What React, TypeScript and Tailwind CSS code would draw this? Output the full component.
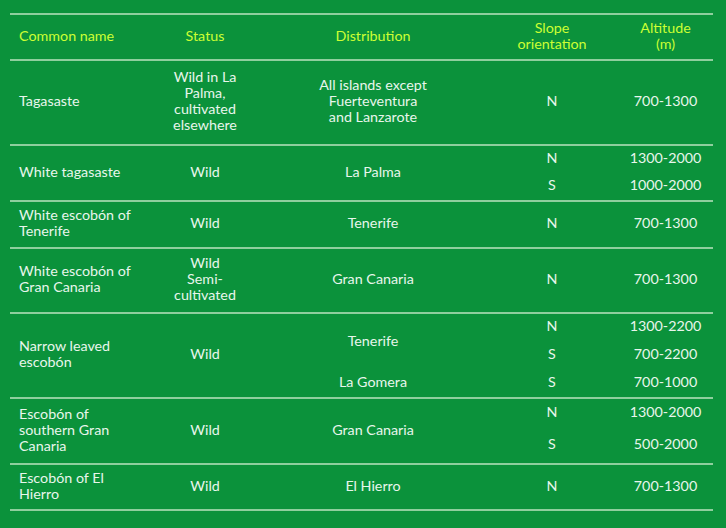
const LINE = "border-b-2 border-[#8fcf9e]";

interface SubRow {
  dist?: string;
  distSpan?: number;
  slope: string;
  alt: string;
  h: number;
}

interface Species {
  name: string[];
  status: string[];
  subs: SubRow[];
}

const DATA: Species[] = [
  {
    name: ["Tagasaste"],
    status: ["Wild in La", "Palma,", "cultivated", "elsewhere"],
    subs: [{ dist: "All islands except\nFuerteventura\nand Lanzarote", slope: "N", alt: "700-1300", h: 85 }],
  },
  {
    name: ["White tagasaste"],
    status: ["Wild"],
    subs: [
      { dist: "La Palma", distSpan: 2, slope: "N", alt: "1300-2000", h: 27 },
      { slope: "S", alt: "1000-2000", h: 29 },
    ],
  },
  {
    name: ["White escobón of", "Tenerife"],
    status: ["Wild"],
    subs: [{ dist: "Tenerife", slope: "N", alt: "700-1300", h: 47 }],
  },
  {
    name: ["White escobón of", "Gran Canaria"],
    status: ["Wild", "Semi-", "cultivated"],
    subs: [{ dist: "Gran Canaria", slope: "N", alt: "700-1300", h: 65 }],
  },
  {
    name: ["Narrow leaved", "escobón"],
    status: ["Wild"],
    subs: [
      { dist: "Tenerife", distSpan: 2, slope: "N", alt: "1300-2200", h: 28 },
      { slope: "S", alt: "700-2200", h: 29 },
      { dist: "La Gomera", slope: "S", alt: "700-1000", h: 28 },
    ],
  },
  {
    name: ["Escobón of", "southern Gran", "Canaria"],
    status: ["Wild"],
    subs: [
      { dist: "Gran Canaria", distSpan: 2, slope: "N", alt: "1300-2000", h: 29 },
      { slope: "S", alt: "500-2000", h: 37 },
    ],
  },
  {
    name: ["Escobón of El", "Hierro"],
    status: ["Wild"],
    subs: [{ dist: "El Hierro", slope: "N", alt: "700-1300", h: 46 }],
  },
];

function Lines({ lines }: { lines: string[] }) {
  return (
    <>
      {lines.map((l, i) => (
        <div key={i}>{l}</div>
      ))}
    </>
  );
}

export default function App() {
  return (
    <div className="h-[528px] w-[726px] bg-[#0b923b] pt-[13px] pl-[10px] font-['Lato','Liberation_Sans',sans-serif] text-[14.3px] leading-[16px] text-[#e8f6ec]">
      <table className="w-[703px] table-fixed border-collapse border-t-2 border-[#8fcf9e]">
        <colgroup>
          <col className="w-[140px]" />
          <col className="w-[110px]" />
          <col className="w-[226px]" />
          <col className="w-[132px]" />
          <col className="w-[95px]" />
        </colgroup>
        <thead>
          <tr className={`h-[46px] text-[#ccff33] ${LINE}`}>
            <th className="pb-[3px] pl-[9px] text-left font-normal">Common name</th>
            <th className="pb-[3px] font-normal">Status</th>
            <th className="pb-[3px] font-normal">Distribution</th>
            <th className="pb-[3px] font-normal">
              <div>Slope</div>
              <div>orientation</div>
            </th>
            <th className="pb-[3px] font-normal">
              <div>Altitude</div>
              <div>(m)</div>
            </th>
          </tr>
        </thead>
        <tbody>
          {DATA.flatMap((sp, si) =>
            sp.subs.map((sub, i) => {
              const last = i === sp.subs.length - 1;
              return (
                <tr key={`${si}-${i}`} className={last ? LINE : ""} style={{ height: sub.h }}>
                  {i === 0 && (
                    <>
                      <td rowSpan={sp.subs.length} className={`pb-[3px] pl-[9px] text-left ${LINE}`}>
                        <Lines lines={sp.name} />
                      </td>
                      <td rowSpan={sp.subs.length} className={`pb-[3px] text-center ${LINE}`}>
                        <Lines lines={sp.status} />
                      </td>
                    </>
                  )}
                  {sub.dist !== undefined && (
                    <td rowSpan={sub.distSpan ?? 1} className="pb-[3px] text-center">
                      <Lines lines={sub.dist.split("\n")} />
                    </td>
                  )}
                  <td className="pb-[3px] text-center">{sub.slope}</td>
                  <td className="pb-[3px] text-center">{sub.alt}</td>
                </tr>
              );
            }),
          )}
        </tbody>
      </table>
    </div>
  );
}
